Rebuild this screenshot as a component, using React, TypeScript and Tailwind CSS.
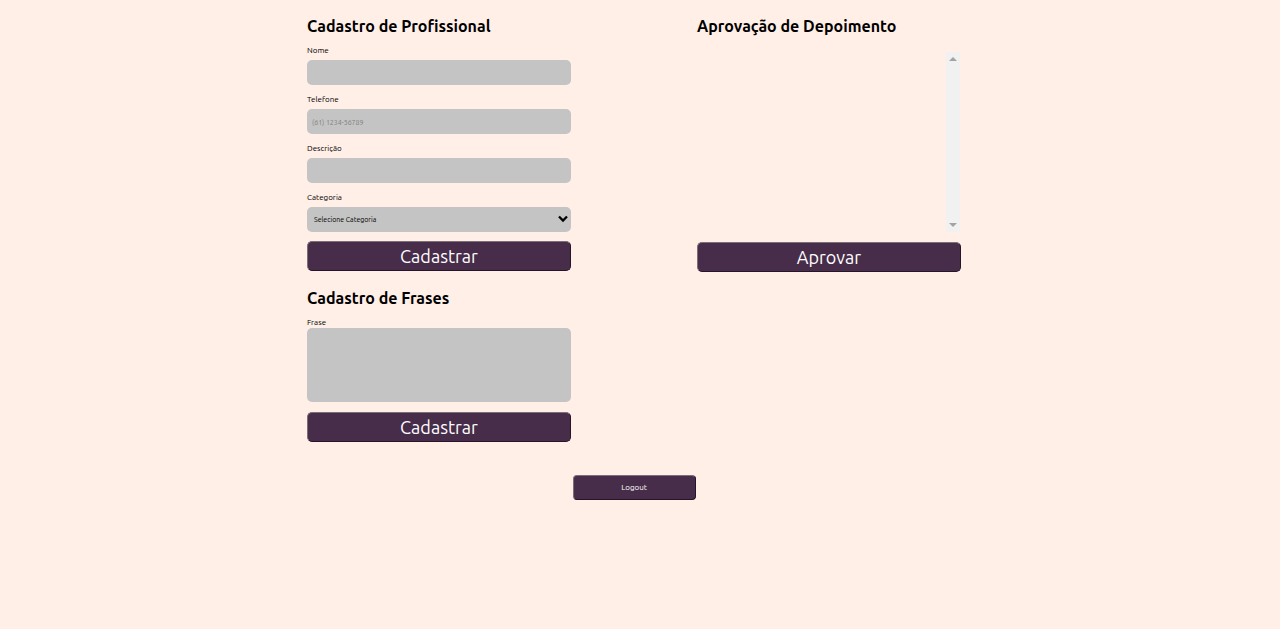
import type { ReactNode } from 'react';

const control =
  'block h-[25px] w-full appearance-none rounded-[5px] bg-[#c4c4c4] text-[7px] text-black outline-none placeholder:text-[#808080]';

function Title({ children }: { children: ReactNode }) {
  return <h1 className="text-base leading-6 font-bold whitespace-nowrap">{children}</h1>;
}

function Field({ id, label, children }: { id: string; label: string; children: ReactNode }) {
  return (
    <div>
      <label htmlFor={id} className="mb-1 block text-[8px] leading-[10px]">
        {label}
      </label>
      {children}
    </div>
  );
}

function SubmitButton({ children }: { children: ReactNode }) {
  return (
    <button
      type="submit"
      className="block h-[30px] w-full rounded-[5px] border border-t-[#7b7078] border-r-[#24152a] border-b-[#24152a] border-l-[#7b7078] bg-[#472d4a] text-lg leading-6 text-white"
    >
      {children}
    </button>
  );
}

export default function App() {
  return (
    <main className="min-h-screen bg-[#ffefe7] pt-3.5 pr-3 font-['Ubuntu','Noto_Sans',sans-serif] text-black">
      <div className="mx-auto grid max-w-[654px] grid-cols-2 gap-x-[126px]">
        <div>
          <form onSubmit={(e) => e.preventDefault()}>
            <Title>Cadastro de Profissional</Title>
            <div className="mt-2 mb-[9px] flex flex-col gap-2.5">
              <Field id="nome" label="Nome">
                <input id="nome" type="text" className={`${control} px-[5px]`} />
              </Field>
              <Field id="telefone" label="Telefone">
                <input
                  id="telefone"
                  type="tel"
                  placeholder="(61) 1234-56789"
                  className={`${control} px-[5px]`}
                />
              </Field>
              <Field id="descricao" label="Descrição">
                <input id="descricao" type="text" className={`${control} px-[5px]`} />
              </Field>
              <Field id="categoria" label="Categoria">
                <div className="relative">
                  <select id="categoria" className={`${control} pr-5 pl-[7px]`}>
                    <option>Selecione Categoria</option>
                  </select>
                  <svg
                    viewBox="0 0 10 8"
                    className="pointer-events-none absolute top-2 right-[3px] h-2 w-2.5"
                    fill="none"
                    stroke="black"
                    strokeWidth="2.3"
                    aria-hidden="true"
                  >
                    <path d="M1 1.5l4 4 4-4" />
                  </svg>
                </div>
              </Field>
            </div>
            <SubmitButton>Cadastrar</SubmitButton>
          </form>

          <form className="mt-[15px]" onSubmit={(e) => e.preventDefault()}>
            <Title>Cadastro de Frases</Title>
            <div className="mt-2 mb-2.5">
              <label htmlFor="frase" className="block text-[8px] leading-[10px]">
                Frase
              </label>
              <textarea
                id="frase"
                className="block h-[74px] w-full resize-none rounded-[5px] bg-[#c4c4c4] p-[5px] text-[7px] outline-none"
              />
            </div>
            <SubmitButton>Cadastrar</SubmitButton>
          </form>
        </div>

        <form onSubmit={(e) => e.preventDefault()}>
          <Title>Aprovação de Depoimento</Title>
          <div className="mt-3.5 mb-2.5 flex h-[180px] justify-end pr-px">
            <div className="flex w-3.5 flex-col items-center justify-between bg-[#f1f1f1] py-[5px]">
              <svg viewBox="0 0 8 4" className="h-1 w-2" fill="#a3a3a3" aria-hidden="true">
                <path d="M0 4L4 0l4 4z" />
              </svg>
              <svg viewBox="0 0 8 4" className="h-1 w-2" fill="#a3a3a3" aria-hidden="true">
                <path d="M0 0l4 4 4-4z" />
              </svg>
            </div>
          </div>
          <SubmitButton>Aprovar</SubmitButton>
        </form>
      </div>

      <button
        type="button"
        className="mx-auto mt-[33px] block h-[25px] w-[123px] rounded-[4px] border border-t-[#7b7078] border-r-[#24152a] border-b-[#24152a] border-l-[#7b7078] bg-[#472d4a] text-[8px] leading-3 text-white"
      >
        Logout
      </button>
    </main>
  );
}
